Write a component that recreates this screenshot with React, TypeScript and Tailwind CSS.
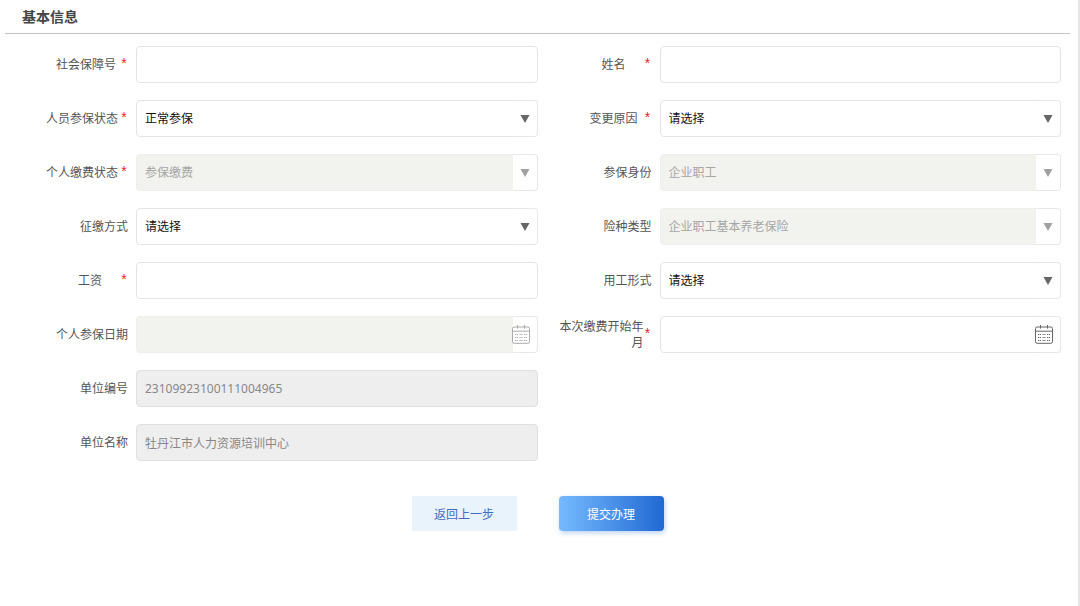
import type { ReactNode } from "react"
import clsx from "clsx"

type FieldProps = {
  id: string
  label: string
  required?: boolean
  gap?: string
  children: ReactNode
}

const control = "block h-[37px] w-full appearance-none rounded border pl-2 text-[12px] leading-4 outline-none"
const enabled = "border-[#e4e4e4] bg-white text-[#111] focus:border-blue-400"
const locked = "border-[#eeeeec] bg-[#f2f2ee] text-[#a6a6a6] opacity-100"

function Field({ id, label, required, gap = "gap-0", children }: FieldProps) {
  return (
    <div className="flex h-[37px] items-center">
      <label
        htmlFor={id}
        className={clsx("flex w-[122px] shrink-0 items-center justify-end pr-2 pl-4 text-right text-[12px] leading-4 text-[#555]", gap)}
      >
        <span>{label}</span>
        {required && (
          <span className="w-2 shrink-0 pb-1 text-center font-['Liberation_Sans',sans-serif] text-[14px] leading-4 text-[#ee1c25]">*</span>
        )}
      </label>
      <div className="relative min-w-0 flex-1">{children}</div>
    </div>
  )
}

function Select({ id, value, disabled }: { id: string; value: string; disabled?: boolean }) {
  return (
    <>
      <select id={id} disabled={disabled} className={clsx(control, "pr-7", disabled ? locked : enabled)}>
        <option>{value}</option>
      </select>
      <span className="pointer-events-none absolute inset-y-0 right-0 flex w-[25px] items-center justify-center rounded-r border border-l-0 border-[#e8e8e8] bg-white">
        <svg width="10" height="8" viewBox="0 0 10 8" className={disabled ? "text-[#a0a0a0]" : "text-[#666]"}>
          <path d="M0.5 0h9L5 8z" fill="currentColor" />
        </svg>
      </span>
    </>
  )
}

function CalendarIcon() {
  return (
    <svg width="18" height="19" viewBox="0 0 18 19" fill="none" stroke="currentColor" className="shrink-0">
      <rect x="0.5" y="2" width="17" height="16.3" rx="1.6" />
      <path d="M0.5 6.2h17M5.5 0v3.6M12.5 0v3.6" />
      <path d="M3 9.5h3M7.5 9.5h3M12 9.5h3M3 12.5h3M7.5 12.5h3M12 12.5h3M3 15.5h3M7.5 15.5h3M12 15.5h3" strokeDasharray="1.2 0.6" />
    </svg>
  )
}

function DateInput({ id, disabled }: { id: string; disabled?: boolean }) {
  return (
    <>
      <input id={id} type="text" disabled={disabled} className={clsx(control, "pr-8", disabled ? locked : enabled)} />
      <button
        type="button"
        aria-label="选择日期"
        disabled={disabled}
        className={clsx(
          "absolute inset-y-0 right-0 flex w-[25px] items-center justify-end rounded-r border border-l-0 border-[#e8e8e8] bg-white pr-[7px]",
          disabled ? "text-[#aaa]" : "text-[#666]"
        )}
      >
        <CalendarIcon />
      </button>
    </>
  )
}

export default function App() {
  return (
    <main className="min-h-screen border-r-2 border-[#e6e6e6] bg-white pr-2 pl-[5px] font-['Noto_Sans','Noto_Sans_CJK_SC',sans-serif]">
      <h1 className="h-[34px] border-b border-[#c4c4c4] pl-[17px] text-[14px] leading-[34px] font-bold text-[#444]">
        基本信息
      </h1>

      <form onSubmit={(e) => e.preventDefault()}>
        <div className="grid grid-cols-2 gap-y-[17px] pt-3 pr-[9px] pl-[9px]">
          <Field id="ssn" label="社会保障号" required gap="gap-1">
            <input id="ssn" type="text" className={clsx(control, enabled)} />
          </Field>
          <Field id="name" label="姓名" required gap="gap-[18px]">
            <input id="name" type="text" className={clsx(control, enabled)} />
          </Field>

          <Field id="person-status" label="人员参保状态" required gap="gap-[2px]">
            <Select id="person-status" value="正常参保" />
          </Field>
          <Field id="reason" label="变更原因" required gap="gap-[6px]">
            <Select id="reason" value="请选择" />
          </Field>

          <Field id="pay-status" label="个人缴费状态" required gap="gap-[2px]">
            <Select id="pay-status" value="参保缴费" disabled />
          </Field>
          <Field id="identity" label="参保身份">
            <Select id="identity" value="企业职工" disabled />
          </Field>

          <Field id="method" label="征缴方式">
            <Select id="method" value="请选择" />
          </Field>
          <Field id="insurance" label="险种类型">
            <Select id="insurance" value="企业职工基本养老保险" disabled />
          </Field>

          <Field id="salary" label="工资" required gap="gap-[18px]">
            <input id="salary" type="text" className={clsx(control, enabled)} />
          </Field>
          <Field id="employment" label="用工形式">
            <Select id="employment" value="请选择" />
          </Field>

          <Field id="join-date" label="个人参保日期">
            <DateInput id="join-date" disabled />
          </Field>
          <Field id="start-month" label="本次缴费开始年月" required>
            <DateInput id="start-month" />
          </Field>

          <div className="col-start-1">
            <Field id="company-no" label="单位编号">
              <input
                id="company-no"
                readOnly
                value="23109923100111004965"
                className={clsx(control, "border-[#e0e0e0] bg-[#eeeeee] text-[#888]")}
              />
            </Field>
          </div>
          <div className="col-start-1">
            <Field id="company-name" label="单位名称">
              <input
                id="company-name"
                readOnly
                value="牡丹江市人力资源培训中心"
                className={clsx(control, "border-[#e0e0e0] bg-[#eeeeee] text-[#888]")}
              />
            </Field>
          </div>
        </div>

        <div className="flex justify-center gap-[42px] pt-[35px] pb-8 text-[12px] leading-4">
          <button type="button" className="h-[35px] w-[105px] rounded-xs bg-[#e9f3fc] pt-[2px] text-[#3f6cc0]">
            返回上一步
          </button>
          <button
            type="submit"
            className="h-[35px] w-[105px] rounded bg-linear-to-r from-[#76baff] to-[#1f69d2] pt-[2px] text-white shadow-[1px_2px_5px_rgba(31,105,210,0.3)]"
          >
            提交办理
          </button>
        </div>
      </form>
    </main>
  )
}
